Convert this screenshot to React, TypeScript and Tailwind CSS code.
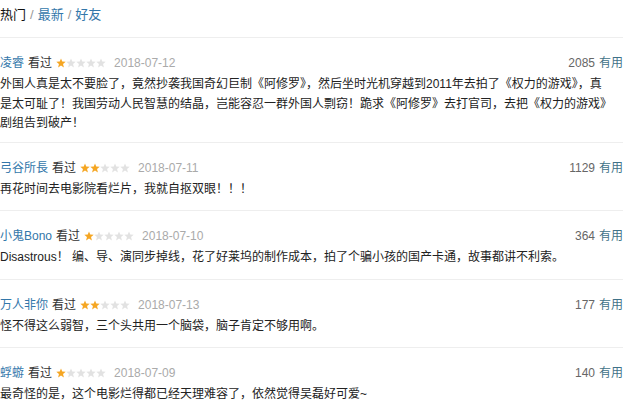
import React from "react";

type Review = { name: string; rating: number; date: string; votes: number; lines: string[] };

const reviews: Review[] = [
  {
    name: "凌睿",
    rating: 1,
    date: "2018-07-12",
    votes: 2085,
    lines: [
      "外国人真是太不要脸了，竟然抄袭我国奇幻巨制《阿修罗》，然后坐时光机穿越到2011年去拍了《权力的游戏》，真",
      "是太可耻了！我国劳动人民智慧的结晶，岂能容忍一群外国人剽窃！跪求《阿修罗》去打官司，去把《权力的游戏》",
      "剧组告到破产！",
    ],
  },
  { name: "弓谷所長", rating: 2, date: "2018-07-11", votes: 1129, lines: ["再花时间去电影院看烂片，我就自抠双眼！！！"] },
  {
    name: "小鬼Bono",
    rating: 1,
    date: "2018-07-10",
    votes: 364,
    lines: ["Disastrous！ 编、导、演同步掉线，花了好莱坞的制作成本，拍了个骗小孩的国产卡通，故事都讲不利索。"],
  },
  { name: "万人非你", rating: 2, date: "2018-07-13", votes: 177, lines: ["怪不得这么弱智，三个头共用一个脑袋，脑子肯定不够用啊。"] },
  { name: "蜉蝣", rating: 1, date: "2018-07-09", votes: 140, lines: ["最奇怪的是，这个电影烂得都已经天理难容了，依然觉得吴磊好可爱~"] },
];

function Star({ filled }: { filled: boolean }) {
  return (
    <svg width="10" height="10" viewBox="0 0 10 10" className="block">
      <polygon
        points="5,0.4 6.25,3.6 9.7,3.8 7.05,6 7.9,9.4 5,7.5 2.1,9.4 2.95,6 0.3,3.8 3.75,3.6"
        fill={filled ? "#f5a623" : "#e2e2e2"}
      />
    </svg>
  );
}

export default function App() {
  return (
    <div
      className="w-[640px] h-[415px] overflow-hidden bg-white text-[12px]"
      style={{ fontFamily: '"Liberation Sans", "Noto Sans CJK SC", sans-serif' }}
    >
      <div className="w-[623px]">
        <div className="flex items-center h-5 mt-[5px] mb-[12px] text-[13px]">
          <span className="text-[#111]">热门</span>
          <span className="text-[#999] mx-[4px]">/</span>
          <span className="text-[#37a]">最新</span>
          <span className="text-[#999] mx-[4px]">/</span>
          <span className="text-[#37a]">好友</span>
        </div>
        {reviews.map((r, i) => (
          <div key={i} className={"border-t border-[#eeeeee] pt-[15px] " + (i === 0 ? "pb-[8px]" : "pb-[11px]")}>
            <div className="flex items-center h-5">
              <span className="text-[#37a]">{r.name}</span>
              <span className="text-[#333] ml-[4px]">看过</span>
              <span className="flex ml-[4px]">
                {[0, 1, 2, 3, 4].map((k) => (
                  <Star key={k} filled={k < r.rating} />
                ))}
              </span>
              <span className="text-[#aaa] ml-[8px]">{r.date}</span>
              <span className="ml-auto text-[#666]">{r.votes}</span>
              <span className="ml-[4px] text-[#3f7288]">有用</span>
            </div>
            <div className="mt-[2px] text-[#222] leading-[19.5px]">
              {r.lines.map((l, j) => (
                <div key={j} className="whitespace-nowrap">
                  {l}
                </div>
              ))}
            </div>
          </div>
        ))}
      </div>
    </div>
  );
}
